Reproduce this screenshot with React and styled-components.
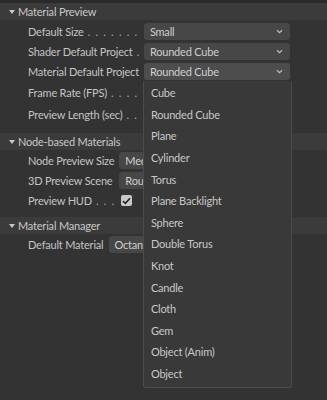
import React from "react";
import styled, { createGlobalStyle } from "styled-components";

const Global = createGlobalStyle`
  html, body { margin: 0; padding: 0; background: #333333; }
  body {
    font-family: Lato, "Liberation Sans", sans-serif;
    font-size: 11px;
    letter-spacing: -0.2px;
    color: #c4c4c4;
  }
`;

const Page = styled.div`
  width: 327px;
  height: 400px;
  background: #333333;
  border-top: 3px solid #2a2a2a;
  box-sizing: border-box;
  position: relative;
  overflow: hidden;
`;

const Header = styled.div`
  height: 17px;
  display: flex;
  align-items: center;
  gap: 3px;
  padding-left: 9px;
  background: #3b3b3b;
  color: #c8c8c8;
`;

const Caret = styled.span`
  width: 0;
  height: 0;
  border-left: 3px solid transparent;
  border-right: 3px solid transparent;
  border-top: 4px solid #c8c8c8;
  margin-top: 1px;
`;

const Body = styled.div`
  display: grid;
  grid-template-columns: max-content 1fr;
  column-gap: 5px;
  row-gap: 3px;
  padding: ${(p) => p.$top}px 37px ${(p) => p.$bottom}px 28px;
`;

const Label = styled.div`
  display: flex;
  align-items: center;
  height: ${(p) => p.$h || 17}px;
  white-space: nowrap;
  min-width: 0;
`;

const Leader = styled.span`
  flex: 1 1 0;
  width: 0;
  overflow: hidden;
  white-space: nowrap;
  letter-spacing: 1.2px;
  color: #a8a8a8;
`;

const Cell = styled.div`
  display: flex;
  align-items: center;
  height: ${(p) => p.$h || 17}px;
  position: relative;
`;

const Select = styled.div`
  flex: 1;
  height: 17px;
  box-sizing: border-box;
  display: flex;
  align-items: center;
  justify-content: space-between;
  padding: 0 7px 0 6px;
  background: ${(p) => (p.$open ? "#4d4d4d" : "#474747")};
  border-radius: 3px;
  color: #cfcfcf;
  white-space: nowrap;
  overflow: hidden;
`;

const Chevron = () => (
  <svg width="7" height="5" viewBox="0 0 7 5">
    <path d="M1 1.2 L3.5 3.6 L6 1.2" fill="none" stroke="#bdbdbd" strokeWidth="1.2" />
  </svg>
);

const Check = styled.div`
  width: 11px;
  height: 11px;
  border-radius: 2px;
  background: #c9c9c9;
  display: flex;
  align-items: center;
  justify-content: center;
  margin-left: 2px;
`;

const Menu = styled.div`
  position: absolute;
  top: 18px;
  left: -1px;
  width: calc(100% + 3px);
  height: 307px;
  box-sizing: border-box;
  background: #393939;
  border: 1px solid #4b4b4b;
  border-top: none;
  border-radius: 0 0 3px 3px;
  display: grid;
  grid-auto-rows: 21.6px;
  padding-top: 1px;
  z-index: 5;
`;

const MenuItem = styled.div`
  display: flex;
  align-items: center;
  padding-left: 7px;
  color: #c8c8c8;
  white-space: nowrap;
`;

const dots = "\u00a0. . . . . . . . . . . . . . . . . . . . . . . . . . . . . .";

const items = [
  "Cube",
  "Rounded Cube",
  "Plane",
  "Cylinder",
  "Torus",
  "Plane Backlight",
  "Sphere",
  "Double Torus",
  "Knot",
  "Candle",
  "Cloth",
  "Gem",
  "Object (Anim)",
  "Object",
];

const Row = ({ label, leader, h, children }) => (
  <>
    <Label $h={h}>
      {label}
      {leader && <Leader>{dots}</Leader>}
    </Label>
    <Cell $h={h}>{children}</Cell>
  </>
);

const Drop = ({ value, open }) => (
  <Select $open={open}>
    <span>{value}</span>
    <Chevron />
  </Select>
);

export default function App() {
  return (
    <Page>
      <Global />
      <Header>
        <Caret />
        Material Preview
      </Header>
      <Body $top={3} $bottom={9}>
        <Row label="Default Size" leader>
          <Drop value="Small" />
        </Row>
        <Row label="Shader Default Project" leader>
          <Drop value="Rounded Cube" />
        </Row>
        <Row label="Material Default Project" leader>
          <Drop value="Rounded Cube" open />
          <Menu>
            {items.map((it) => (
              <MenuItem key={it}>{it}</MenuItem>
            ))}
          </Menu>
        </Row>
        <Row label="Frame Rate (FPS)" leader h={19} />
        <Row label="Preview Length (sec)" leader h={19} />
      </Body>
      <Header>
        <Caret />
        Node-based Materials
      </Header>
      <Body $top={2} $bottom={8}>
        <Row label="Node Preview Size" leader>
          <Drop value="Medium" />
        </Row>
        <Row label="3D Preview Scene" leader>
          <Drop value="Rounded Cube" />
        </Row>
        <Row label="Preview HUD" leader>
          <Check>
            <svg width="9" height="8" viewBox="0 0 9 8">
              <path d="M1 4.2 L3.4 6.4 L8 1.2" fill="none" stroke="#262626" strokeWidth="1.6" />
            </svg>
          </Check>
        </Row>
      </Body>
      <Header>
        <Caret />
        Material Manager
      </Header>
      <Body $top={2} $bottom={8}>
        <Row label="Default Material" leader>
          <Drop value="Octane Material" />
        </Row>
      </Body>
    </Page>
  );
}
